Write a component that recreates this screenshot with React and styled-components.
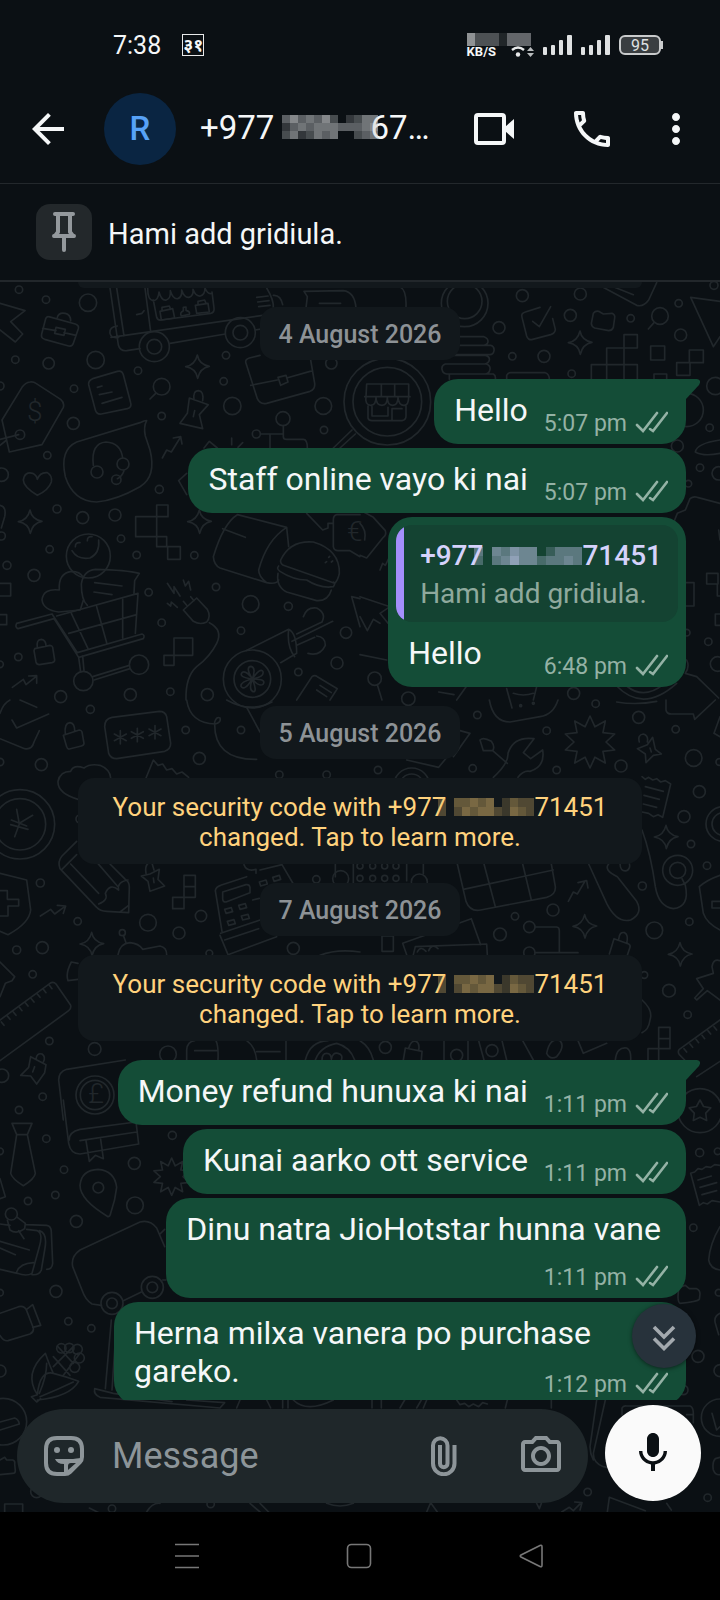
import React, { useState } from "react";
import styled, { createGlobalStyle } from "styled-components";
import {
  MdArrowBack,
  MdMic,
  MdMoreVert,
  MdOutlineCameraAlt,
  MdOutlinePhone,
} from "react-icons/md";

const GlobalStyle = createGlobalStyle`
  * {
    box-sizing: border-box;
  }
  body {
    margin: 0;
    background: #000;
    color: #f5f7f8;
    font-family: Roboto, "Noto Sans", sans-serif;
  }
`;

// every digit is the strength of one cell, 0 leaves it empty
const Mosaic = ({ rows, cell, cellHeight = cell, color, overlap = 0, after = 0 }) => (
  <MosaicSvg
    width={rows[0].length * cell}
    height={rows.length * cellHeight}
    $overlap={overlap}
    $after={after}
    fill={color}
    shapeRendering="crispEdges"
    aria-hidden="true"
  >
    {rows.map((row, y) =>
      row
        .split("")
        .map((n, x) => (
          <rect
            key={x + "-" + y}
            x={x * cell}
            y={y * cellHeight}
            width={cell}
            height={cellHeight}
            fillOpacity={n / 10}
          />
        ))
    )}
  </MosaicSvg>
);

const TITLE_MOSAIC = ["464546302355", "245455544456", "352354500345"];
const QUOTE_MOSAIC = ["405465502444", "304575534454"];
const NOTICE_MOSAIC = ["304454502433", "303545532543"];

const Ticks = () => (
  <TicksSvg width="33" height="22" viewBox="0 0 33 22" fill="none" aria-hidden="true">
    <path
      d="M2 14l6 6L22 2M15 18l3 2L32 2"
      stroke="#94b2a5"
      strokeWidth="2.6"
      strokeLinecap="round"
    />
  </TicksSvg>
);

const Signal = () => (
  <svg width="29" height="20" fill="#dfe1e2" aria-hidden="true">
    <rect x="0" y="12" width="4" height="8" rx="1" />
    <rect x="8" y="10" width="4" height="10" rx="1" />
    <rect x="16" y="5" width="4" height="15" rx="1" />
    <rect x="24" y="0" width="5" height="20" rx="1" />
  </svg>
);

const Wifi = () => (
  <svg width="24" height="12" viewBox="0 0 24 12" aria-hidden="true">
    <path d="M2 4Q8 -1 14 4" fill="none" stroke="#e8e9ea" strokeWidth="2.4" />
    <circle cx="8" cy="8.500" r="2.200" fill="#e8e9ea" />
    <path d="M17 5l3.500-4L24 5zM17 7l3.500 4L24 7z" fill="#b9bcbe" />
  </svg>
);

const VideoIcon = () => (
  <svg width="48" height="48" viewBox="0 0 48 48" aria-hidden="true">
    <rect x="6" y="10" width="28" height="28" rx="2" fill="none" stroke="currentColor" strokeWidth="4" />
    <path d="M35 22l9-8v20l-9-8z" fill="currentColor" />
  </svg>
);

const PinIcon = () => (
  <svg width="24" height="40" viewBox="0 0 24 40" fill="none" stroke="#94999d" aria-hidden="true">
    <path d="M3 2H21" strokeWidth="4" strokeLinecap="round" />
    <path d="M6 2V20L3 24H21L18 20V2" strokeWidth="4" strokeLinejoin="round" />
    <path d="M2 24H22M12 25V38" strokeWidth="4" strokeLinecap="round" />
  </svg>
);

const StickerIcon = () => (
  <svg width="40" height="40" viewBox="0 0 40 40" fill="none" aria-hidden="true">
    <path
      d="M13 2H27Q38 2 38 13V21Q38 24 36 26L26 36Q24 38 21 38H13Q2 38 2 27V13Q2 2 13 2Z"
      stroke="currentColor"
      strokeWidth="4"
    />
    <circle cx="13" cy="14" r="3" fill="currentColor" />
    <circle cx="27" cy="14" r="3" fill="currentColor" />
    <path d="M11 23H29Q37 22 37 22V25L25 37H20V28Q13 28 11 23Z" fill="currentColor" />
    <path d="M24 34V30Q24 27 27 27H32Z" fill="#1f272a" />
  </svg>
);

const ClipIcon = () => (
  <svg width="26" height="40" viewBox="0 0 26 40" fill="none" aria-hidden="true">
    <path
      d="M23.500 9V27.500A10.750 10.750 0 0 1 2 27.500V9.500A7.250 7.250 0 0 1 16.500 9.500V27.500A3.750 3.750 0 0 1 9 27.500V9"
      stroke="currentColor"
      strokeWidth="4"
    />
  </svg>
);

const ChevronsIcon = () => (
  <svg width="24" height="26" viewBox="0 0 24 26" fill="none" aria-hidden="true">
    <path d="M2 2l10 10L22 2M2 13.500l10 10 10-10" stroke="#a3a9ae" strokeWidth="3.600" />
  </svg>
);

const starPoints = (x, y, outer, inner, count) =>
  Array.from({ length: count * 2 }, (_, i) => {
    const r = i % 2 ? inner : outer;
    const a = (Math.PI * i) / count - Math.PI / 2;
    return `${x + r * Math.cos(a)},${y + r * Math.sin(a)}`;
  }).join(" ");

const sparklePath = ([x, y]) =>
  `M${x} ${y - 35}q5 28 36 34q-28 5-35 36q-5-30-36-35q28-5 35-35z`;

const asteriskPath = ([x, y]) =>
  `M${x} ${y - 20}v40M${x - 18} ${y - 10}l36 20M${x - 18} ${y + 10}l36-20`;

// wallpaper tiles, drawn on a grid three times finer than the page
const TILES = [
  {
    at: [0, 0],
    circles: [
      [57, 29, 11], [138, 59, 11], [264, 68, 26], [46, 239, 11], [146, 250, 17], [287, 240, 26],
      [414, 272, 11], [678, 226, 11], [671, 304, 11], [697, 378, 26], [970, 378, 25], [994, 250, 17],
      [222, 326, 11], [220, 430, 18], [485, 408, 11], [142, 526, 11], [478, 628, 12], [171, 687, 12],
      [345, 705, 18], [248, 713, 18], [149, 808, 11], [363, 776, 11], [410, 825, 11], [583, 826, 11],
      [21, 856, 12], [102, 886, 18], [446, 937, 11], [648, 921, 11], [752, 972, 25], [865, 979, 12],
      [485, 1028, 11], [723, 1052, 11], [1038, 1058, 17], [55, 1131, 11], [0, 1153, 10], [0, 318, 12],
      [5, 584, 20], [485, 320, 25], [1011, 1149, 18], [895, 1176, 11], [511, 1235, 11], [391, 1244, 18],
      [622, 1244, 18], [182, 1250, 18], [849, 416, 21], [769, 462, 12], [972, 450, 11], [4, 768, 12],
      [463, 200, 45], [463, 200, 22], [721, 158, 45], [721, 158, 22], [60, 464, 14], [291, 576, 18],
      [369, 552, 18], [349, 599, 14], [265, 828, 66], [250, 1203, 29], [417, 1154, 29],
      [757, 1197, 87], [757, 1197, 55],
    ],
    sparkles: [[592, 260], [90, 725], [598, 725]],
    paths: [
      "M0 70L75 92L32 125L68 162L46 186L0 150",
      "M146 110L226 132Q238 136 235 146L220 190Q217 200 206 198L134 178Q122 174 125 162L137 116Q140 108 146 110ZM128 145L168 152M192 158L228 166M168 142l28 6-4 18-28-6zM172 112Q176 96 196 100Q212 104 212 122",
      "M330 24L355 195Q360 214 380 212L420 206M350 24L372 168M435 24L452 155M333 172L830 100M510 190L676 162M766 150L790 146M352 138Q328 140 330 160Q334 176 356 172M410 104l16-4 6-8",
      "M460 60L470 112Q474 122 484 120L632 100Q644 98 642 84L636 36M443 24q0 36 16 38q16 0 18-26q8 28 22 24q14-4 12-28q8 26 22 24q14-4 12-26q8 24 22 22q14-4 12-24q8 22 22 20q14-4 14-24q8 20 20 16",
      "M480 94l38-8 6 28-40 6zM486 92v-10l22-4 4 10M586 76l38-6 4 26-38 4zM594 74v-10l20-4 4 10M544 108q-6-10 6-16v-10l8-1v10q14 4 10 12z",
      "M770 52l34-4M773 66l34-4M776 80l34-4M800 24Q822 60 820 84M820 46Q842 44 848 74",
      "M912 34L1030 32Q1064 36 1068 84M912 34L922 50L918 84M958 70H1022",
      "M278 296L352 274Q366 270 370 284L392 368Q396 382 382 386L304 402Q290 404 286 390L266 314Q264 302 278 296ZM292 322l14-4M298 344l38-8M306 370l60-18",
      "M90 306Q100 304 108 310L182 358Q194 368 190 382L126 494L28 516L6 420L66 322Q76 308 90 306ZM0 478L56 464M0 496L20 480",
      "M467 340L450 357M568 354L625 374L598 404L608 446L540 430L562 400ZM582 360Q578 332 596 332Q612 334 608 362M584 392l-4 18",
      "M780 226L748 234Q734 238 738 250L772 356Q780 374 800 370L930 334Q946 328 944 310L932 240M752 316L832 300M860 294L938 272M834 292l24-6 6 20-22 10z",
      "M440 422Q430 440 436 468Q440 480 450 510Q470 590 420 620Q350 660 290 666Q220 664 196 590Q178 510 230 486L420 428Q438 420 440 422ZM280 556Q272 490 318 486Q362 488 368 534M372 572Q366 590 352 596",
      "M487 534L500 510L514 516L540 474M520 474L542 470L546 492",
      "M112 646Q70 620 70 600Q74 574 98 580Q110 586 112 598Q120 576 142 578Q158 588 154 606Q146 630 112 646Z",
      "M470 675h34v35h-34zM407 710h63v60h-63zM470 770h30v30h-30zM503 800h38v38h-38z",
      "M850 437V470Q850 478 860 478H910Q922 478 922 504M782 462H850M810 462V504M695 474V494M728 488l-14 14M612 504L628 484L652 504M560 580L536 602L560 644",
      "M216 812Q232 840 270 834Q300 820 296 780M226 800q0-14 14-12M262 782q0-14 14-12",
      "M240 990L176 996Q130 990 126 960Q130 924 178 930Q174 880 214 874Q240 874 250 892",
      "M402 940L404 902L418 880Q380 870 286 868Q250 872 244 912Q244 960 262 976M284 908l82 10M282 936l54 8M250 960l-8 26",
      "M50 1030L156 1002M54 1046L162 1016M50 1030Q44 1040 54 1046M156 1002L232 1118L426 1062M162 1016L236 1132L430 1076Q436 1066 426 1062M170 1008L414 940L406 1060M214 1000L264 1106M290 980L320 1088M368 958V1074M206 1060L410 1004M236 1132L242 1176M248 1128L252 1172M278 1190L388 1156M282 1200L390 1166",
      "M104 1106L150 1096Q156 1096 158 1102L164 1140Q164 1146 156 1148L118 1154Q110 1154 108 1146L102 1112ZM112 1104Q108 1078 124 1078Q138 1080 138 1098",
      "M37 1222L70 1198L78 1214L108 1190M86 1188L110 1187L110 1210M0 910h32v38h-32M0 1004h20v30h-20M522 1074h56v52h-56zM492 1126h30v30h-30z",
      "M712 704L860 742L866 800M712 704Q670 730 640 830Q642 856 660 864L800 908Q830 914 836 900M860 742Q800 780 776 870Q776 890 800 908M668 746L736 772",
      "M842 840Q870 780 940 786Q1020 810 1018 880Q1014 900 1004 910L850 856Q840 850 842 840ZM836 858Q828 866 840 874Q880 900 920 900Q960 926 1000 920Q1008 910 1000 906M834 880Q828 920 860 936L950 962Q984 964 994 930M976 848l4-3M994 846l4-3M986 832l3-3",
      "M550 990L590 954L622 988Q634 1010 620 1026Q600 1036 580 1024ZM560 976l-10-12M582 962l-10-12M628 1028Q670 1050 650 1090Q630 1130 590 1160Q556 1190 558 1260M502 910l20 30v-20l18 28M550 900l6 18 10-14 6 26M502 970l10 8 2-12 18 16",
      "M757 1197q-22-36-4-38q16 4 4 38q24-36 32-22q4 16-32 22q44 0 32 16q-12 8-32-16q16 40 2 38q-14-6-2-38q-24 38-34 22q-2-14 34-22q-44-6-30-20q12-6 30 20",
      "M738 1112L866 1048Q890 1060 890 1120L842 1148M866 1048Q860 1100 884 1130M876 1084L998 1024M890 1096L944 1072M910 1010Q920 980 950 984Q980 1000 966 1026L890 1062M924 1120Q960 1130 976 1096Q976 1070 950 1068",
      "M890 1260L936 1190Q944 1184 952 1190L1012 1226L990 1260M960 1216l34 22M950 1230l30 20",
      "M1080 704H1010Q1000 706 1000 720V800Q1002 812 1014 812H1050L1080 830M920 700L968 750L984 744V730H998M1000 504L1056 450M1020 504L1066 462M1080 1040L1055 950L1080 956",
      "M0 676Q20 680 14 710L4 744",
    ],
    signs: [[104, 424, "$"], [1064, 784, "€"]],
  },
  {
    at: [1080, 0],
    circles: [
      [82, 365, 130], [82, 365, 103], [314, 70, 70], [314, 64, 52], [417, 143, 18], [487, 47, 18],
      [661, 42, 18], [631, 106, 18], [457, 229, 11], [552, 229, 18], [635, 281, 11], [812, 115, 11],
      [956, 70, 11], [900, 108, 25], [962, 165, 18], [1062, 16, 12], [1066, 318, 26], [1049, 443, 11],
      [952, 498, 18], [1020, 563, 11], [1076, 580, 20], [985, 611, 10], [980, 1058, 10], [1045, 1085, 11],
      [1073, 1152, 22], [44, 1196, 20], [145, 1256, 20], [641, 1240, 18], [980, 390, 50],
    ],
    sparkles: [[660, 188]],
    paths: [
      "M245 170H372q12 4 12 14t-12 12H250M262 196H392q12 4 10 16t-12 12H250M262 226H376q14 4 12 14t-14 12H256q-12 4-10 16t14 14H376q12-2 14-14t-12-16M268 298V282H400q8 4 6 16M440 298v-12q4-8 12-8H556q12 4 12 20",
      "M540 82L496 96Q482 100 486 112L500 168Q504 182 518 178L572 164Q586 160 586 148L578 116M518 124L538 140L572 80",
      "M700 100Q706 92 716 94L730 102L756 100Q766 104 764 114L760 142Q756 152 746 152L704 144Q694 140 694 130ZM882 128L865 147",
      "M792 164h40v40h-40zM740 204h52v50h-52zM694 298v-44h138v44M740 254v44M792 204v94M872 198h42v42h-42zM988 210h42v38h-42zM950 248h40v38h-40zM882 298v-16h38v16",
      "M1080 64L992 52L1060 200L1080 170M700 6L830 76Q850 82 866 60L890 8M760 20L820 44M120 20Q140 30 138 80",
      "M20 312H146V350q0 26-14 26q-16 0-18-24q0 24-16 24q-16 0-16-24q0 24-16 24q-18 0-18-24q0 24-16 24q-18-2-14-26ZM14 350H150M64 312V350M104 312V350M24 378V414Q26 422 36 422H126Q138 420 138 408V378M36 380V408H84V382M96 422V386H126",
      "M1080 520Q1030 530 1006 516Q1010 490 1080 480M944 720L952 700L976 690L990 656Q1000 648 1012 652L1080 670M1080 780L1076 750",
      "M0 690L40 712L76 752Q80 764 70 772L20 834L0 826M0 730Q20 750 14 780M0 950L90 980L60 1000L84 1030M0 1010L22 1052L40 1018L60 1030M60 870L68 850L76 856L86 836",
      "M1040 880h34v32h-34zM978 908h24v70h-24M1080 1002h-14v34h14M1072 912v36h8M0 1124L80 1140M52 1214L66 1260M320 1218L290 1260M236 1236l46 8",
      "M440 1226L456 1284M530 1220L520 1260M460 1240q30 10 60 0M976 1180L1010 1190L1076 1254M770 1218Q850 1300 950 1210M800 1218Q850 1260 910 1214M980 1140Q990 1160 976 1180",
    ],
  },
  {
    at: [0, 1260],
    circles: [
      [271, 28, 12], [557, 90, 11], [598, 175, 18], [723, 90, 11], [838, 224, 11], [980, 224, 11],
      [124, 194, 18], [0, 186, 11], [60, 373, 104], [60, 373, 77], [121, 549, 12], [233, 664, 11],
      [444, 668, 25], [537, 699, 18], [603, 648, 17], [50, 750, 12], [127, 743, 18], [98, 823, 11],
      [148, 1023, 11], [284, 1047, 19], [504, 1063, 25], [128, 1190, 11], [57, 1230, 11], [6, 1127, 20],
      [880, 745, 18], [949, 538, 11], [628, 760, 10], [1022, 536, 24], [285, 1185, 57], [285, 1185, 44],
      [367, 698, 9], [240, 357, 12],
    ],
    sparkles: [[275, 732]],
    asterisks: [[361, 112], [412, 105], [465, 97]],
    paths: [
      "M336 52L478 34Q496 34 500 50L512 130Q512 148 494 154L350 176Q332 176 326 160L314 80Q314 56 336 52Z",
      "M36 60L50 84L146 42M0 116L74 146Q96 150 102 126L118 92M0 40Q10 10 30 0M60 0L110 22",
      "M190 106L238 90Q244 90 246 96L252 130Q252 136 244 138L208 147Q202 148 200 140ZM196 102Q192 70 210 68Q224 70 224 92",
      "M234 298Q172 280 174 244Q180 214 212 214Q220 192 252 204Q270 190 300 196Q330 208 332 234M438 234L460 180L474 196L488 192L500 210L516 206L530 222L546 216L566 232",
      "M50 328L58 372L44 410M58 370L98 346M32 374L84 388M34 360L80 378",
      "M230 424L186 468Q172 484 180 506L290 622Q300 634 320 634L386 638L388 560Q388 546 376 538L330 492M186 508L230 464M212 492L296 580M276 470L352 558M296 612Q326 600 316 580Q330 548 356 570Q350 546 384 540M360 636L386 616",
      "M0 520L80 540L92 630Q88 670 24 704L0 694M0 572H22V598H56V618H24V648H0M121 648L152 628L164 642L194 620M172 616L197 618L190 640",
      "M424 528L450 522L478 508L474 538L494 558L450 574L444 544ZM438 520q-4-20 6-30M462 510l-6-20M460 534l2 14M552 526h34v34h-34zM552 560v32h34v-32M518 592h34v34h-34z",
      "M830 710L684 764L660 706M666 694L646 572Q648 560 662 556L740 530M780 510L846 494L880 552M662 700L780 660M668 576L738 554Q748 552 750 562V578L678 606Q668 606 668 596ZM732 494Q740 516 768 508V520M674 720L776 686",
      "M674 628l20-5 4 12-20 5zM716 616l20-5 4 12-20 5zM682 664l20-5 4 12-20 5zM724 648l20-5 4 12-20 5zM778 546l20-6 4 12-20 6zM818 532l20-6 4 12-20 6zM758 600l20-5",
      "M354 764Q360 730 390 728Q416 730 428 748L480 738Q500 742 500 764M370 706L378 728",
      "M0 786L44 830L36 842L16 850L0 890M204 842Q196 820 214 786L234 790M204 842L234 838",
      "M0 960L150 850Q160 844 168 852L212 916Q214 926 206 932L0 1082M4 966l8 10M22 948l8 10M40 936l8 10M58 922l8 10M76 908l8 10M94 896l8 10M112 882l8 10M130 868l8 10M148 856l8 10",
      "M92 1070L138 1094L134 1118L110 1152L92 1128L62 1126L86 1102ZM108 1078Q110 1058 126 1062Q138 1070 130 1086M104 1100l-6 16M376 1080L200 1108Q176 1116 176 1140L190 1260",
      "M560 1080V1050Q562 1024 584 1022M648 1022Q656 1040 654 1080M584 1052H654M740 1022Q766 1040 770 1080M770 1055H840M858 1022V1080M916 1080Q930 1024 984 1022M946 1080Q960 1040 1010 1030Q1050 1040 1064 1080M966 1080q0-20 14-20t14 18q4-22 20-18t10 20",
      "M560 0Q570 70 646 72Q664 68 660 54Q650 48 644 66Q640 180 770 178M740 22L780 96M680 0Q750 40 816 6M960 766Q1010 746 1080 756M1006 492V530M1060 492V550",
    ],
    signs: [[288, 1210, "£"]],
  },
  {
    at: [1080, 1260],
    circles: [
      [352, 45, 11], [707, 11, 11], [836, 52, 18], [560, 92, 11], [947, 88, 11], [54, 210, 11],
      [338, 205, 11], [590, 210, 11], [783, 198, 18], [1001, 174, 25], [1018, 275, 18], [972, 350, 18],
      [993, 432, 11], [1041, 497, 11], [847, 558, 12], [953, 511, 45], [953, 511, 24], [579, 630, 18],
      [465, 649, 11], [420, 703, 19], [508, 681, 17], [883, 691, 25], [988, 665, 11], [508, 758, 17],
      [927, 872, 19], [983, 944, 11], [853, 825, 10], [76, 1042, 18], [396, 1052, 18], [290, 1066, 18],
      [1090, 372, 52], [1090, 372, 34], [1078, 186, 10], [0, 498, 9], [38, 498, 9], [74, 498, 9],
      [108, 498, 9], [0, 535, 9], [38, 535, 9], [74, 535, 9], [108, 535, 9], [178, 546, 24],
      [155, 258, 54], [155, 258, 36], [1020, 1232, 66], [482, 17, 3], [520, 10, 3],
    ],
    sparkles: [[918, 411], [674, 679], [960, 763]],
    stars: [[690, 126, 78, 48, 10], [1020, 1234, 34, 18, 5]],
    paths: [
      "M388 0Q400 66 450 66L540 50Q580 44 594 0M360 120Q370 110 394 124Q406 140 398 152L370 152ZM398 152L442 190M522 116Q460 108 444 160Q446 190 400 232M522 116L490 158L512 176L548 150Q556 200 510 214Q490 210 474 232",
      "M300 92L330 100L280 170M140 180L236 202L262 170M832 146L862 134L878 112L886 148L904 162L880 166L858 188L856 162ZM838 126Q832 104 850 102Q866 106 862 126M870 144l4 12",
      "M846 230l10 8 10-6 12 8 12-4 12 10 14-4 16 10L908 352L894 344L880 350L866 340L846 336M856 260l54 14M852 286l46 12M850 312l40 10",
      "M918 0V30Q920 42 934 42H1000L1004 58L1066 0M1080 110L1062 100L1080 50M770 6Q830 16 890 4",
      "M292 492L318 604Q330 636 362 630L560 592Q588 584 586 560L574 492M310 568L580 510M372 492L406 620M488 492L514 600",
      "M686 492L740 610Q770 670 812 660Q850 640 830 604L772 530Q730 510 746 492M780 490Q780 516 800 512Q812 506 808 490M846 390Q872 460 886 560Q896 620 940 626Q990 620 976 556L966 536",
      "M1080 526Q1040 540 1018 560L1030 640Q1040 670 1080 690M1080 604H1056V624H1080M625 604L640 576L652 582L676 542M654 548L680 542L684 564",
      "M525 681H590Q598 682 598 692V758M525 758H654M762 716L806 732Q812 736 810 742L802 766M762 716L748 762M776 718Q778 694 794 698Q806 704 800 730",
      "M140 764L128 730L334 656L362 734M160 764L166 740L380 732L382 764M172 756q10-20 26-2M206 752q10-24 28-6M66 708h34v46h-34zM140 492v50M190 492v30",
      "M1080 782Q1060 774 1056 800L1060 820L1010 836L1030 866L1004 894L1010 900L1042 872L1080 900M846 900Q880 930 870 960Q866 990 846 998M896 982h34v34h-34zM896 1016v30h34v-30M864 1080V1046H896V1080",
      "M1080 960L958 1048Q952 1056 958 1064L974 1080M1010 1130L1080 1084M972 1046l8 10M990 1032l8 10M1008 1018l8 10M1026 1006l8 10M1044 992l8 10M1062 980l8 10",
      "M130 1080L136 1044L186 1054L184 1080M146 1046Q152 1020 168 1024Q180 1030 176 1050M252 1022V1080M324 1022V1080M356 1022L372 1080M426 1022L440 1080M488 1022L520 1080M560 1060Q570 1010 600 1022Q616 1040 590 1070Q570 1080 560 1060M654 1022L670 1060L740 1030M766 1080Q770 1040 800 1044Q814 1050 812 1080M0 1022Q30 1040 40 1080",
    ],
  },
  {
    at: [0, 2460],
    circles: [
      [139, 116, 11], [192, 209, 11], [403, 190, 18], [517, 106, 12], [166, 285, 11], [84, 303, 11],
      [229, 364, 18], [405, 316, 25], [0, 154, 10], [168, 574, 18], [205, 664, 11], [274, 685, 11],
      [0, 578, 10], [0, 813, 18], [336, 610, 33], [336, 610, 16], [457, 562, 33], [457, 562, 16],
      [10, 965, 70], [295, 263, 16], [110, 1175, 18], [336, 1226, 11], [632, 1212, 11], [34, 342, 18],
      [184, 745, 14], [208, 744, 14], [232, 748, 15], [238, 774, 15], [224, 802, 15],
    ],
    stars: [[515, 230, 56, 34, 10]],
    paths: [
      "M36 70H96L82 104L106 220Q104 236 70 257Q36 236 32 220L50 104ZM50 104H82",
      "M190 0L206 130Q212 162 240 162L416 132L408 66L240 88Q206 96 208 120M240 122L410 96M258 122L268 184L286 166L310 176L302 118",
      "M324 350Q240 300 240 256Q244 210 294 208Q344 212 350 262Q346 300 332 340Q330 350 324 350Z",
      "M304 616L276 612Q256 600 246 570L218 500Q212 470 240 450L420 366Q450 358 470 384L494 440M480 402l14-14M370 602L424 576M488 540h10",
      "M0 372L30 376M78 374L140 376Q154 378 154 396L158 490Q156 508 140 508M80 388L112 392Q130 400 118 440L96 520Q80 530 52 520L0 508M118 392Q144 400 134 450L124 510Q118 526 96 524M0 424L88 450M0 444L46 464M50 516Q60 490 100 488M22 360L30 390Q50 404 74 386L76 370L52 352M56 392L72 416",
      "M0 640L56 620Q74 616 80 632L100 684Q102 696 90 702L24 722Q10 724 0 706M80 628L98 614L122 676L98 682M0 236L16 290L0 296",
      "M112 884Q70 820 136 760Q150 800 160 820M112 884Q120 810 160 820Q200 830 236 844Q210 890 112 900M112 884L94 890L110 906L122 896M140 790Q140 830 118 880M120 890Q170 870 220 846M172 738L220 790M160 770L210 826M240 760L190 826M220 740L160 800",
      "M334 660L316 866M348 690L336 870M516 905L340 880L284 866Q280 884 300 892L660 924L674 908L560 900",
      "M0 1080L14 1072L20 1080H38Q46 1082 44 1092L46 1112Q46 1120 38 1120L0 1124M14 1236V1212H68V1236M0 966L44 954Q56 958 58 972L0 990",
      "M268 1224L300 1240M440 1236Q456 1208 480 1210M750 1210L780 1236M780 1210L806 1236M710 924L720 900M800 900L812 924M848 900V924M864 900V924M880 900Q920 940 1000 900M980 1210Q1020 1226 1060 1210",
    ],
  },
  {
    at: [1080, 2460],
    circles: [
      [1019, 158, 12], [1073, 154, 10], [1000, 383, 11], [1014, 769, 18], [1080, 812, 18],
      [1076, 578, 10], [1080, 953, 56], [683, 1176, 11], [1043, 1193, 11], [970, 870, 14],
    ],
    paths: [
      "M992 220l12-4 10-10 12 2 12-8 14 2 12-8 16 2M992 220L1018 316l12-8 12 4 14-10 24 4M1014 240l40-12M1020 262l50-14M1026 284l44-12M1080 380Q1050 430 1046 480Q1050 506 1080 510",
      "M956 562L976 556L988 566H1010Q1020 570 1020 582L1018 598Q1012 606 960 610Q954 606 954 590ZM1080 640Q1060 650 1066 670L1076 704",
      "M736 900L700 1060Q700 1090 730 1100L760 1106M710 900L690 1040Q690 1060 700 1080M786 944V924Q790 916 800 918H990Q1000 922 1000 940V968M980 944h20M1056 940L1070 990L1080 980",
      "M1080 1072L1066 1076Q1056 1086 1060 1110Q1066 1126 1080 1124M742 1236L748 1192L856 1232M605 1236L628 1222L640 1232L664 1208M644 1206L666 1208L660 1230M920 1210L934 1230M200 1236L212 1208L232 1236M530 1210L538 1226L544 1210",
      "M36 900V924M64 900V924M120 924L134 900M170 924L184 900M190 924L200 900M290 900l10 14 14-4 12 10 14-8 16 8 12-12 14 4M436 924L442 900M574 900V924",
    ],
  },
];

const Doodles = () => (
  <Wallpaper viewBox="0 6 2160 3690" preserveAspectRatio="xMidYMin slice" aria-hidden="true">
    {TILES.map((tile, i) => (
      <g key={i} transform={`translate(${tile.at[0]} ${tile.at[1]})`}>
        {tile.circles.map(([x, y, r], n) => (
          <circle key={n} cx={x} cy={y} r={r} />
        ))}
        {tile.paths.map((d, n) => (
          <path key={n} d={d} />
        ))}
        {(tile.sparkles || []).map((p, n) => (
          <path key={n} d={sparklePath(p)} />
        ))}
        {(tile.asterisks || []).map((p, n) => (
          <path key={n} d={asteriskPath(p)} />
        ))}
        {(tile.stars || []).map((s, n) => (
          <polygon key={n} points={starPoints(...s)} />
        ))}
        {(tile.signs || []).map(([x, y, sign]) => (
          <Sign key={sign} x={x} y={y}>
            {sign}
          </Sign>
        ))}
      </g>
    ))}
  </Wallpaper>
);

const Message = ({ text, time, tail, block, quote }) => (
  <Bubble $tail={tail}>
    {quote && (
      <Quote>
        <QuoteName>
          +977
          <Mosaic rows={QUOTE_MOSAIC} cell={9} color="#c5c9f0" overlap={9} />
          71451
        </QuoteName>
        <QuoteText>{quote}</QuoteText>
      </Quote>
    )}
    <BubbleText $block={block}>{text}</BubbleText>
    <Meta $block={block}>
      {time}
      <Ticks />
    </Meta>
  </Bubble>
);

const SecurityNotice = () => (
  <Notice>
    Your security code with +977
    <Mosaic rows={NOTICE_MOSAIC} cell={8} cellHeight={9} color="#e0b86a" overlap={8} />
    71451 changed. Tap to learn more.
  </Notice>
);

const refundMessages = [
  { text: "Money refund hunuxa ki nai", time: "1:11 pm", tail: true },
  { text: "Kunai aarko ott service", time: "1:11 pm" },
  { text: "Dinu natra JioHotstar hunna vane", time: "1:11 pm", block: true },
  { text: "Herna milxa vanera po purchase gareko.", time: "1:12 pm" },
];

export default function App() {
  const [message, setMessage] = useState("");

  return (
    <>
      <GlobalStyle />
      <Phone>
        <StatusBar>
          <Clock>7:38</Clock>
          <DateBadge>३१</DateBadge>
          <StatusRight>
            <Speed>
              <Mosaic rows={["63331444"]} cell={8} cellHeight={13} color="#e8e9ea" />
              <SpeedRow>
                KB/S
                <Wifi />
              </SpeedRow>
            </Speed>
            <Signal />
            <Signal />
            <Battery>95</Battery>
          </StatusRight>
        </StatusBar>

        <Header>
          <IconButton aria-label="Back">
            <MdArrowBack size={48} />
          </IconButton>
          <Avatar>R</Avatar>
          <Title>
            +977
            <Mosaic rows={TITLE_MOSAIC} cell={8} color="#d5d7d9" overlap={-8} after={-8} />
            67…
          </Title>
          <Actions>
            <IconButton aria-label="Video call">
              <VideoIcon />
            </IconButton>
            <IconButton aria-label="Call">
              <MdOutlinePhone size={48} />
            </IconButton>
            <MoreButton aria-label="More options">
              <MdMoreVert size={48} />
            </MoreButton>
          </Actions>
        </Header>

        <Pinned>
          <PinBox>
            <PinIcon />
          </PinBox>
          <PinnedText>Hami add gridiula.</PinnedText>
        </Pinned>

        <Chat>
          <Doodles />
          <ListArea>
            <List>
              <ScrolledNotice />
              <DateChip>4 August 2026</DateChip>
              <Group>
                <Message text="Hello" time="5:07 pm" tail />
                <Message text="Staff online vayo ki nai" time="5:07 pm" />
                <Message text="Hello" time="6:48 pm" quote="Hami add gridiula." />
              </Group>
              <DateChip>5 August 2026</DateChip>
              <SecurityNotice />
              <DateChip>7 August 2026</DateChip>
              <SecurityNotice />
              <Group>
                {refundMessages.map((item) => (
                  <Message key={item.text} {...item} />
                ))}
              </Group>
            </List>
            <ScrollButton aria-label="Scroll to bottom">
              <ChevronsIcon />
            </ScrollButton>
          </ListArea>

          <Composer>
            <InputPill>
              <IconButton aria-label="Stickers">
                <StickerIcon />
              </IconButton>
              <MessageInput
                aria-label="Message"
                placeholder="Message"
                value={message}
                onChange={(e) => setMessage(e.target.value)}
              />
              <IconButton aria-label="Attach">
                <ClipIcon />
              </IconButton>
              <IconButton aria-label="Camera">
                <MdOutlineCameraAlt size={48} />
              </IconButton>
            </InputPill>
            <MicButton aria-label="Record voice message">
              <MdMic size={48} />
            </MicButton>
          </Composer>
        </Chat>

        <NavBar>
          <IconButton aria-label="Recent apps">
            <NavIcon viewBox="0 0 26 26">
              <path d="M1 1.500H25M1 13H25M1 24.500H25" />
            </NavIcon>
          </IconButton>
          <IconButton aria-label="Home">
            <NavIcon viewBox="0 0 26 26">
              <rect x="1.500" y="1.500" width="23" height="23" rx="4" />
            </NavIcon>
          </IconButton>
          <IconButton aria-label="Go back">
            <NavIcon viewBox="0 0 26 26">
              <path d="M22 2.500Q24 1.500 24 4V22Q24 24.500 22 23.500L3 14Q1.500 13 3 12Z" />
            </NavIcon>
          </IconButton>
        </NavBar>
      </Phone>
    </>
  );
}

const Phone = styled.div`
  display: flex;
  flex-direction: column;
  height: 100vh;
  background: #0b1014;
`;

const MosaicSvg = styled.svg`
  display: inline-block;
  position: relative;
  vertical-align: baseline;
  margin-left: ${({ $overlap }) => -$overlap}px;
  margin-right: ${({ $after }) => $after}px;
`;

const TicksSvg = styled.svg`
  margin-bottom: 4px;
`;

const StatusBar = styled.div`
  display: flex;
  align-items: center;
  height: 90px;
  padding: 0 59px 0 113px;
`;

const Clock = styled.span`
  font-size: 25px;
`;

const DateBadge = styled.span`
  display: flex;
  align-items: center;
  justify-content: center;
  width: 22px;
  height: 22px;
  margin-left: 21px;
  border: 1px solid #e8e9ea;
  font-size: 18px;
  font-weight: 700;
  line-height: 20px;
`;

const StatusRight = styled.div`
  display: flex;
  align-items: center;
  gap: 9px;
  margin-left: auto;
`;

const Speed = styled.div`
  display: flex;
  flex-direction: column;
`;

const SpeedRow = styled.div`
  display: flex;
  align-items: center;
  justify-content: space-between;
  gap: 14px;
  font-size: 13px;
  font-weight: 700;
  line-height: 12px;
`;

const Battery = styled.span`
  position: relative;
  width: 42px;
  height: 20px;
  border: 2px solid #c9cbcc;
  border-radius: 6px;
  background: #3a3e41;
  color: #dfe1e2;
  font-size: 16px;
  line-height: 17px;
  text-align: center;

  &::after {
    content: "";
    position: absolute;
    top: 4px;
    right: -4px;
    width: 2px;
    height: 8px;
    background: #c9cbcc;
  }
`;

const IconButton = styled.button`
  display: flex;
  flex: none;
  padding: 0;
  border: none;
  background: none;
  color: inherit;
`;

const MoreButton = styled(IconButton)`
  margin-left: -14px;
`;

const Header = styled.header`
  display: flex;
  align-items: center;
  height: 94px;
  padding: 0 20px 16px 24px;
  border-bottom: 1px solid #23282c;
`;

const Avatar = styled.div`
  flex: none;
  width: 72px;
  height: 72px;
  margin-left: 32px;
  border-radius: 50%;
  background: #0a2542;
  color: #57a2f7;
  font-size: 33px;
  font-weight: 500;
  line-height: 72px;
  text-align: center;
`;

const Title = styled.h1`
  flex: 1;
  margin: 0 0 0 24px;
  padding-bottom: 2px;
  font-size: 33px;
  font-weight: 400;
  line-height: 38px;
  white-space: nowrap;
`;

const Actions = styled.div`
  display: flex;
  flex: none;
  gap: 50px;
`;

const Pinned = styled.div`
  display: flex;
  align-items: center;
  gap: 16px;
  height: 98px;
  padding: 0 36px;
  border-bottom: 2px solid #22272b;
`;

const PinnedText = styled.span`
  padding-top: 3px;
  font-size: 29px;
`;

const PinBox = styled.div`
  display: flex;
  align-items: center;
  justify-content: center;
  width: 56px;
  height: 56px;
  border-radius: 14px;
  background: #23282b;
`;

const Chat = styled.main`
  position: relative;
  display: flex;
  flex: 1;
  flex-direction: column;
  min-height: 0;
`;

const Wallpaper = styled.svg`
  position: absolute;
  inset: 0;
  width: 100%;
  height: 100%;
  fill: none;
  stroke: #21272b;
  stroke-width: 5px;
  stroke-linecap: round;
  stroke-linejoin: round;
`;

const Sign = styled.text`
  fill: #21272b;
  stroke: none;
  font-size: 84px;
  font-weight: 300;
  text-anchor: middle;
`;

const ListArea = styled.div`
  position: relative;
  flex: 1;
  min-height: 0;
`;

const List = styled.div`
  display: flex;
  flex-direction: column;
  align-items: center;
  gap: 19px;
  height: 100%;
  padding: 0 34px;
  overflow-y: auto;
  scrollbar-width: none;

  > * {
    flex: none;
  }
`;

const ScrolledNotice = styled.div`
  width: 564px;
  max-width: 100%;
  height: 6px;
  border-radius: 0 0 16px 16px;
  background: #12181c;
`;

const DateChip = styled.div`
  padding: 13px 18px 11px;
  border-radius: 16px;
  background: #12181c;
  color: #8d9296;
  font-size: 25px;
  font-weight: 500;
  line-height: 29px;
`;

const Notice = styled.div`
  width: 564px;
  max-width: 100%;
  padding: 14px 24px 12px;
  border-radius: 16px;
  background: #12181c;
  color: #ffd27d;
  font-size: 26px;
  line-height: 30px;
  text-align: center;
`;

const Group = styled.div`
  display: flex;
  flex-direction: column;
  align-items: flex-end;
  gap: 4px;
  width: 100%;
`;

const Bubble = styled.div`
  position: relative;
  display: flow-root;
  max-width: 572px;
  padding: 12px 18px 0 20px;
  border-radius: 24px;
  border-top-right-radius: ${({ $tail }) => ($tail ? "0" : "24px")};
  background: #144d37;

  &::after {
    content: "";
    display: ${({ $tail }) => ($tail ? "block" : "none")};
    position: absolute;
    top: 0;
    left: 100%;
    width: 15px;
    height: 20px;
    background: #144d37;
    clip-path: path("M0 0H11Q16 1 13 6L0 20Z");
  }
`;

const BubbleText = styled.span`
  display: ${({ $block }) => ($block ? "block" : "inline")};
  margin-right: ${({ $block }) => ($block ? "7px" : "0")};
  font-size: 32px;
  line-height: 38px;
`;

const Meta = styled.span`
  float: right;
  display: flex;
  align-items: center;
  gap: 8px;
  height: 35px;
  margin: ${({ $block }) => ($block ? "15px" : "18px")} 0 0 16px;
  padding-bottom: 6px;
  color: #94b2a5;
  font-size: 23px;
  line-height: 29px;
`;

const Quote = styled.div`
  position: relative;
  margin: -4px -10px 12px -12px;
  padding: 12px 16px 9px 24px;
  border-radius: 16px;
  background: #144332;
  overflow: hidden;

  &::before {
    content: "";
    position: absolute;
    top: 0;
    bottom: 0;
    left: 0;
    width: 8px;
    background: #a48ffb;
  }
`;

const QuoteName = styled.div`
  color: #d5d2fb;
  font-size: 28px;
  font-weight: 500;
  line-height: 38px;
`;

const QuoteText = styled.div`
  color: #8fa99d;
  font-size: 28px;
  line-height: 38px;
`;

const ScrollButton = styled.button`
  position: absolute;
  right: 24px;
  bottom: 32px;
  display: flex;
  align-items: center;
  justify-content: center;
  width: 64px;
  height: 64px;
  padding: 4px 0 0;
  border: none;
  border-radius: 50%;
  background: #27323b;
  box-shadow: 0 1px 4px rgba(0, 0, 0, 0.5);
`;

const Composer = styled.div`
  position: relative;
  display: flex;
  align-items: flex-start;
  gap: 17px;
  padding: 9px 19px 9px 17px;
`;

const InputPill = styled.div`
  display: flex;
  flex: 1;
  align-items: center;
  min-width: 0;
  height: 94px;
  padding: 0 23px 0 27px;
  border-radius: 47px;
  background: #1f272a;
  color: #8d9599;
`;

const MessageInput = styled.input`
  flex: 1;
  min-width: 0;
  margin: 0 16px 0 28px;
  padding: 0;
  border: none;
  outline: none;
  background: none;
  color: #f5f7f8;
  font: 400 36px Roboto, sans-serif;

  &::placeholder {
    color: #8d9599;
    opacity: 1;
  }

  & + button {
    margin-right: 60px;
  }
`;

const MicButton = styled.button`
  display: flex;
  flex: none;
  align-items: center;
  justify-content: center;
  width: 96px;
  height: 96px;
  margin-top: -4px;
  padding: 0;
  border: none;
  border-radius: 50%;
  background: #fafafa;
  color: #0b1014;
`;

const NavBar = styled.nav`
  display: flex;
  align-items: center;
  justify-content: center;
  gap: 146px;
  height: 88px;
  padding-right: 2px;
  background: #000;
`;

const NavIcon = styled.svg`
  width: 26px;
  height: 26px;
  fill: none;
  stroke: #777;
  stroke-width: 1.6px;
`;
